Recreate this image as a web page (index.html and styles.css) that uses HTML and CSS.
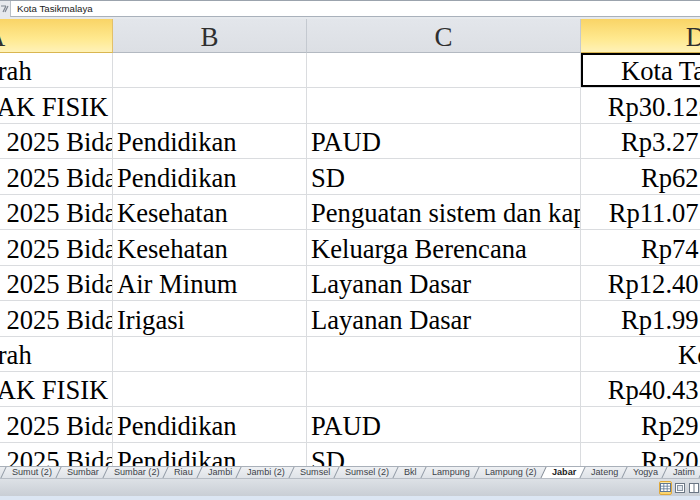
FILE: index.html
```html
<!DOCTYPE html>
<html>
<head>
<meta charset="utf-8">
<link rel="stylesheet" href="styles.css">
</head>
<body>
<div class="app">
  <div class="formula">
    <div class="fx">
      <svg width="10" height="14" viewBox="0 0 10 14"><path d="M1 4h5M3 10l3-6M5 10l3-6" stroke="#7d858f" stroke-width="1.2" fill="none"/></svg>
    </div>
    <div class="input">Kota Tasikmalaya</div>
  </div>
  <div class="sheet">
    <div class="grid">
      <div class="hd sel">A</div><div class="hd">B</div><div class="hd">C</div><div class="hd sel">D</div>

      <div class="c a">Total Daerah</div><div class="c"></div><div class="c"></div><div class="c d name active">Kota Tasikmalaya</div>
      <div class="c a">Jumlah DAK FISIK</div><div class="c"></div><div class="c"></div><div class="c d">Rp30.123.456.789</div>
      <div class="c a k">DAK TA. 2025 Bidang Pendidikan</div><div class="c">Pendidikan</div><div class="c">PAUD</div><div class="c d">Rp3.271.234.567</div>
      <div class="c a k">DAK TA. 2025 Bidang Pendidikan</div><div class="c">Pendidikan</div><div class="c">SD</div><div class="c d">Rp621.234.567</div>
      <div class="c a k">DAK TA. 2025 Bidang Kesehatan</div><div class="c">Kesehatan</div><div class="c">Penguatan sistem dan kapasitas kesehatan</div><div class="c d">Rp11.071.234.567</div>
      <div class="c a k">DAK TA. 2025 Bidang Kesehatan</div><div class="c">Kesehatan</div><div class="c">Keluarga Berencana</div><div class="c d">Rp741.234.567</div>
      <div class="c a k">DAK TA. 2025 Bidang Air Minum</div><div class="c">Air Minum</div><div class="c">Layanan Dasar</div><div class="c d">Rp12.401.234.567</div>
      <div class="c a k">DAK TA. 2025 Bidang Irigasi</div><div class="c">Irigasi</div><div class="c">Layanan Dasar</div><div class="c d">Rp1.991.234.567</div>
      <div class="c a">Total Daerah</div><div class="c"></div><div class="c"></div><div class="c d name name2">Kota Banjar</div>
      <div class="c a">Jumlah DAK FISIK</div><div class="c"></div><div class="c"></div><div class="c d">Rp40.431.234.567</div>
      <div class="c a k">DAK TA. 2025 Bidang Pendidikan</div><div class="c">Pendidikan</div><div class="c">PAUD</div><div class="c d">Rp291.234.567</div>
      <div class="c a k">DAK TA. 2025 Bidang Pendidikan</div><div class="c">Pendidikan</div><div class="c">SD</div><div class="c d">Rp201.234.567</div>
    </div>
  </div>
  <div class="tabs">
    <span class="tab"><span>Sumut (2)</span></span>
    <span class="tab"><span>Sumbar</span></span>
    <span class="tab"><span>Sumbar (2)</span></span>
    <span class="tab"><span>Riau</span></span>
    <span class="tab"><span>Jambi</span></span>
    <span class="tab"><span>Jambi (2)</span></span>
    <span class="tab"><span>Sumsel</span></span>
    <span class="tab"><span>Sumsel (2)</span></span>
    <span class="tab"><span>Bkl</span></span>
    <span class="tab"><span>Lampung</span></span>
    <span class="tab"><span>Lampung (2)</span></span>
    <span class="tab current"><span>Jabar</span></span>
    <span class="tab"><span>Jateng</span></span>
    <span class="tab"><span>Yogya</span></span>
    <span class="tab"><span>Jatim</span></span>
    <span class="tab"><span>Banten</span></span>
  </div>
  <div class="status">
    <span class="view on">
      <svg width="11" height="9" viewBox="0 0 11 9"><rect x="0.5" y="0.5" width="10" height="8" fill="#fff" stroke="#5f7896"/><path d="M0.5 3.2h10M0.5 5.8h10M3.8 0.5v8M7.2 0.5v8" stroke="#5f7896" stroke-width="0.8"/></svg>
    </span>
    <span class="view">
      <svg width="10" height="10" viewBox="0 0 10 10"><rect x="0.5" y="0.5" width="9" height="9" fill="#fff" stroke="#6b7684"/><rect x="2.5" y="2.5" width="5" height="5" fill="#dfe5ec" stroke="#8a95a2"/></svg>
    </span>
    <span class="view">
      <svg width="10" height="10" viewBox="0 0 10 10"><rect x="0.5" y="0.5" width="9" height="9" fill="#fff" stroke="#6b7684"/><path d="M5 0.5v9" stroke="#6b7684"/></svg>
    </span>
  </div>
  <div class="bottom"></div>
</div>
</body>
</html>
```

FILE: styles.css
```css
html, body {
  margin: 0;
  padding: 0;
  background: #fff;
}

.app {
  width: 700px;
  height: 500px;
  overflow: hidden;
  display: flex;
  flex-direction: column;
}

.formula {
  height: 19px;
  flex: none;
  box-sizing: border-box;
  border-top: 1px solid #9ba3ad;
  padding-bottom: 2px;
  background: #e6e9ed;
  display: flex;
}

.fx {
  width: 10px;
  flex: none;
  display: flex;
  align-items: center;
  justify-content: flex-end;
}

.input {
  flex: 1;
  background: #fff;
  border-left: 1px solid #b9c0c8;
  border-bottom: 1px solid #a9b1bb;
  padding-left: 6px;
  font-family: "Liberation Sans", Arial, sans-serif;
  font-size: 9.7px;
  line-height: 15px;
  color: #1b1b1b;
}

.sheet {
  height: 447px;
  flex: none;
  overflow: hidden;
}

.grid {
  margin-left: -121px;
  display: grid;
  grid-template-columns: 234px 194px 274px 230px;
  grid-template-rows: 34px repeat(12, 35.44px);
  width: 932px;
}

.hd {
  box-sizing: border-box;
  background: linear-gradient(#e3e6eb, #dcdfe4);
  border-right: 1px solid #c4c9d0;
  border-bottom: 1px solid #b3b9c1;
  font-family: "Liberation Serif", "Times New Roman", serif;
  font-size: 27px;
  color: #2f2f2f;
  display: flex;
  align-items: center;
  justify-content: center;
  padding-top: 4px;
}

.hd.sel {
  background: linear-gradient(#f9d466, #ffe98f 60%, #fff2b8);
  border-right-color: #e2c06a;
  border-bottom-color: #d9b651;
}

.c {
  box-sizing: border-box;
  border-right: 1px solid #dadcdf;
  border-bottom: 1px solid #dadcdf;
  font-family: "Liberation Serif", "Times New Roman", serif;
  font-size: 26.6px;
  color: #000;
  white-space: nowrap;
  overflow: hidden;
  display: flex;
  align-items: flex-end;
  padding-left: 4px;
}

.c.a {
  padding-left: 15px;
}

.c.a.k {
  padding-left: 17px;
}

.c.d {
  justify-content: flex-end;
  padding-left: 0;
  padding-right: 5px;
}

.c.d.name {
  justify-content: flex-start;
  padding-right: 0;
  padding-left: 40px;
}

.c.d.name2 {
  padding-left: 97px;
}

.c.active {
  box-shadow: inset 2px 2px 0 #000, inset 0 -2px 0 #000;
}

.tabs {
  height: 12px;
  flex: none;
  box-sizing: border-box;
  background: linear-gradient(#eceef1, #dde1e6);
  border-top: 1px solid #a9b0b9;
  display: flex;
  padding-left: 3px;
  font-family: "Liberation Sans", Arial, sans-serif;
  font-size: 9.1px;
  color: #3d4248;
  overflow: hidden;
  white-space: nowrap;
}

.tab {
  display: inline-flex;
  align-items: center;
  height: 11px;
  padding: 0 6px 0 8px;
  border-left: 1px solid #8f98a3;
  transform: skewX(-25deg);
  background: linear-gradient(#eef0f3, #dfe3e8);
}

.tab > span {
  display: inline-block;
  transform: skewX(25deg);
  line-height: 11px;
}

.tab.current {
  background: #fff;
  font-weight: bold;
  color: #222;
  border-left-color: #7d8691;
}

.status {
  height: 18px;
  flex: none;
  box-sizing: border-box;
  background: linear-gradient(#dde1e6, #c9ced5);
  border-top: 1px solid #b6bcc4;
  display: flex;
  justify-content: flex-end;
  align-items: center;
  gap: 2px;
}

.view {
  width: 12px;
  height: 14px;
  display: flex;
  align-items: center;
  justify-content: center;
}

.view.on {
  width: 13px;
  box-sizing: border-box;
  border: 1px solid #e0a93c;
  background: linear-gradient(#fde9a4, #fbd46a);
  border-radius: 2px;
}

.bottom {
  flex: 1;
  background: #dce6f3;
}
```
